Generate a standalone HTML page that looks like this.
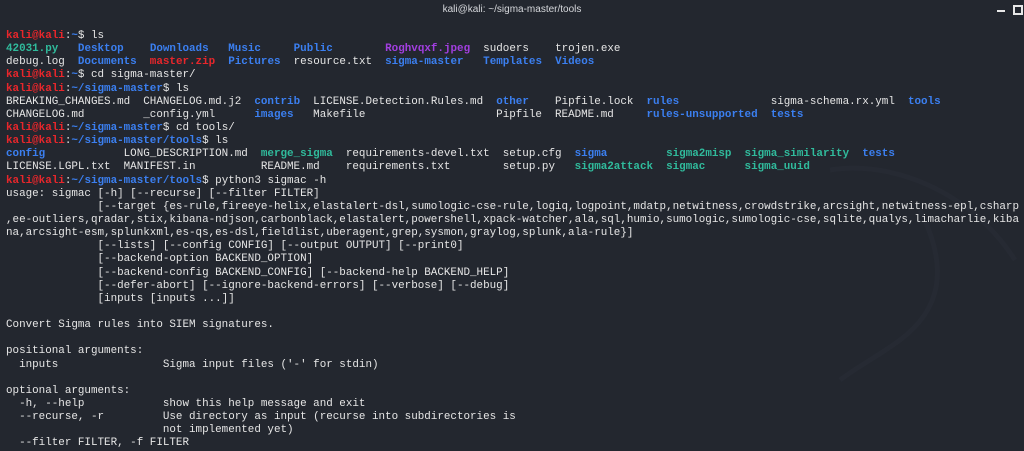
<!DOCTYPE html>
<html><head><meta charset="utf-8"><style>
html,body{margin:0;padding:0;background:#23272f;width:1024px;height:450px;overflow:hidden}
.title{position:absolute;left:0;top:0;width:1024px;height:22px;text-align:center;font:10px "Liberation Sans",sans-serif;color:#d6d8dc;line-height:20px}
.min{position:absolute;left:997px;top:10px;width:8px;height:2px;background:#e8e8e8}
.max{position:absolute;left:1013px;top:5px;width:6px;height:6px;border:2px solid #e8e8e8}
pre{position:absolute;left:6px;top:30px;margin:0;font-family:"Liberation Mono",monospace;font-size:10.9px;line-height:13.14px;color:#e6e6e6;white-space:pre}
.r{color:#e8262b;font-weight:bold}.b{color:#3b7ff0;font-weight:bold}.g{color:#30bb9c;font-weight:bold}.p{color:#a23fe0;font-weight:bold}
</style></head><body>
<div class="title">kali@kali: ~/sigma-master/tools</div>
<div class="min"></div><div class="max"></div>
<svg style="position:absolute;left:800px;top:150px" width="224" height="240"><path d="M30 20 C90 10 170 40 215 110 M120 60 C150 120 140 160 100 190 C80 205 60 215 40 230" stroke="#262a33" stroke-width="5" fill="none"/></svg>
<pre><span class="r">kali@kali</span>:<span class="b">~</span>$ ls
<span class="g">42031.py</span>   <span class="b">Desktop</span>    <span class="b">Downloads</span>   <span class="b">Music</span>     <span class="b">Public</span>        <span class="p">Roghvqxf.jpeg</span>  sudoers    trojen.exe
debug.log  <span class="b">Documents</span>  <span class="r">master.zip</span>  <span class="b">Pictures</span>  resource.txt  <span class="b">sigma-master</span>   <span class="b">Templates</span>  <span class="b">Videos</span>
<span class="r">kali@kali</span>:<span class="b">~</span>$ cd sigma-master/
<span class="r">kali@kali</span>:<span class="b">~/sigma-master</span>$ ls
BREAKING_CHANGES.md  CHANGELOG.md.j2  <span class="b">contrib</span>  LICENSE.Detection.Rules.md  <span class="b">other</span>    Pipfile.lock  <span class="b">rules</span>              sigma-schema.rx.yml  <span class="b">tools</span>
CHANGELOG.md         _config.yml      <span class="b">images</span>   Makefile                    Pipfile  README.md     <span class="b">rules-unsupported</span>  <span class="b">tests</span>
<span class="r">kali@kali</span>:<span class="b">~/sigma-master</span>$ cd tools/
<span class="r">kali@kali</span>:<span class="b">~/sigma-master/tools</span>$ ls
<span class="b">config</span>            LONG_DESCRIPTION.md  <span class="g">merge_sigma</span>  requirements-devel.txt  setup.cfg  <span class="b">sigma</span>         <span class="g">sigma2misp</span>  <span class="g">sigma_similarity</span>  <span class="b">tests</span>
LICENSE.LGPL.txt  MANIFEST.in          README.md    requirements.txt        setup.py   <span class="g">sigma2attack</span>  <span class="g">sigmac</span>      <span class="g">sigma_uuid</span>
<span class="r">kali@kali</span>:<span class="b">~/sigma-master/tools</span>$ python3 sigmac -h
usage: sigmac [-h] [--recurse] [--filter FILTER]
              [--target {es-rule,fireeye-helix,elastalert-dsl,sumologic-cse-rule,logiq,logpoint,mdatp,netwitness,crowdstrike,arcsight,netwitness-epl,csharp
,ee-outliers,qradar,stix,kibana-ndjson,carbonblack,elastalert,powershell,xpack-watcher,ala,sql,humio,sumologic,sumologic-cse,sqlite,qualys,limacharlie,kiba
na,arcsight-esm,splunkxml,es-qs,es-dsl,fieldlist,uberagent,grep,sysmon,graylog,splunk,ala-rule}]
              [--lists] [--config CONFIG] [--output OUTPUT] [--print0]
              [--backend-option BACKEND_OPTION]
              [--backend-config BACKEND_CONFIG] [--backend-help BACKEND_HELP]
              [--defer-abort] [--ignore-backend-errors] [--verbose] [--debug]
              [inputs [inputs ...]]

Convert Sigma rules into SIEM signatures.

positional arguments:
  inputs                Sigma input files ('-' for stdin)

optional arguments:
  -h, --help            show this help message and exit
  --recurse, -r         Use directory as input (recurse into subdirectories is
                        not implemented yet)
  --filter FILTER, -f FILTER
</pre>
</body></html>
